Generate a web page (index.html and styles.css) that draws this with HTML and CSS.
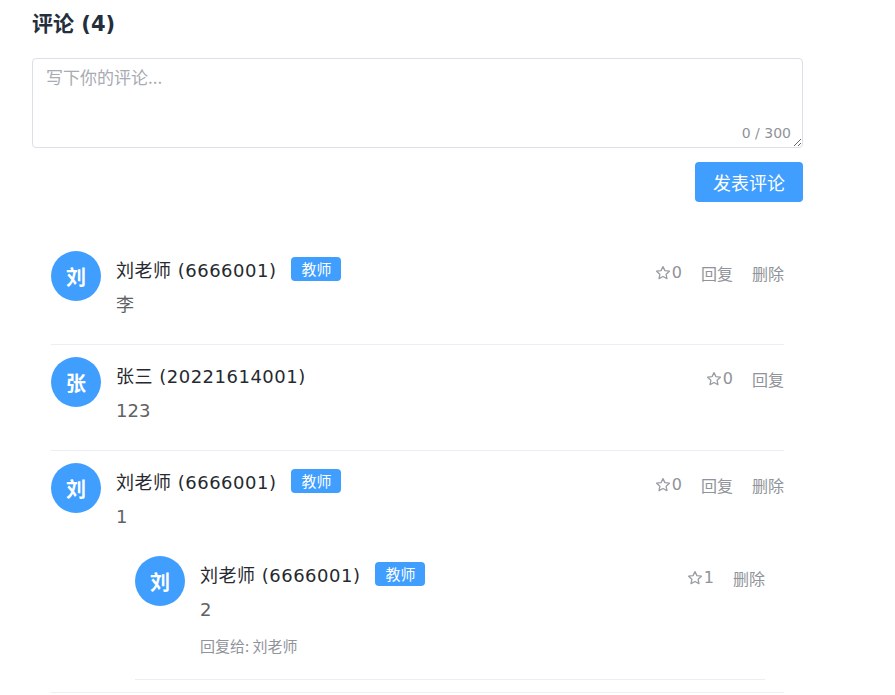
FILE: index.html
```html
<!DOCTYPE html>
<html lang="zh-CN">
<head>
<meta charset="utf-8">
<title>评论</title>
<link rel="stylesheet" href="styles.css">
</head>
<body>
<div class="page">
  <h2 class="title">评论 (4)</h2>
  <div class="editor">
    <textarea class="input" placeholder="写下你的评论..."></textarea>
    <span class="count">0 / 300</span>
  </div>
  <div class="submit-row">
    <button class="btn-primary">发表评论</button>
  </div>

  <div class="comment-list">
    <div class="comment">
      <div class="avatar">刘</div>
      <div class="main">
        <div class="head">
          <div class="who"><span class="name">刘老师 (6666001)</span><span class="tag">教师</span></div>
          <div class="actions">
            <span class="like"><svg class="star" viewBox="0 0 16 16"><path d="M8 1.6l1.95 4.05 4.45.55-3.27 3.07.83 4.41L8 11.52l-3.96 2.16.83-4.41L1.6 6.2l4.45-.55z"/></svg>0</span>
            <span class="act">回复</span>
            <span class="act">删除</span>
          </div>
        </div>
        <div class="text">李</div>
      </div>
    </div>

    <div class="comment">
      <div class="avatar">张</div>
      <div class="main">
        <div class="head">
          <div class="who"><span class="name">张三 (20221614001)</span></div>
          <div class="actions">
            <span class="like"><svg class="star" viewBox="0 0 16 16"><path d="M8 1.6l1.95 4.05 4.45.55-3.27 3.07.83 4.41L8 11.52l-3.96 2.16.83-4.41L1.6 6.2l4.45-.55z"/></svg>0</span>
            <span class="act">回复</span>
          </div>
        </div>
        <div class="text">123</div>
      </div>
    </div>

    <div class="comment">
      <div class="avatar">刘</div>
      <div class="main">
        <div class="head">
          <div class="who"><span class="name">刘老师 (6666001)</span><span class="tag">教师</span></div>
          <div class="actions">
            <span class="like"><svg class="star" viewBox="0 0 16 16"><path d="M8 1.6l1.95 4.05 4.45.55-3.27 3.07.83 4.41L8 11.52l-3.96 2.16.83-4.41L1.6 6.2l4.45-.55z"/></svg>0</span>
            <span class="act">回复</span>
            <span class="act">删除</span>
          </div>
        </div>
        <div class="text">1</div>
        <div class="replies">
          <div class="comment">
            <div class="avatar">刘</div>
            <div class="main">
              <div class="head">
                <div class="who"><span class="name">刘老师 (6666001)</span><span class="tag">教师</span></div>
                <div class="actions">
                  <span class="like"><svg class="star" viewBox="0 0 16 16"><path d="M8 1.6l1.95 4.05 4.45.55-3.27 3.07.83 4.41L8 11.52l-3.96 2.16.83-4.41L1.6 6.2l4.45-.55z"/></svg>1</span>
                  <span class="act">删除</span>
                </div>
              </div>
              <div class="text">2</div>
              <div class="reply-to">回复给: 刘老师</div>
            </div>
          </div>
        </div>
      </div>
    </div>
  </div>
</div>
</body>
</html>
```

FILE: styles.css
```css
* { box-sizing: border-box; }
html, body { margin: 0; background: #fff; }
body {
  font-family: "DejaVu Sans", "Noto Sans CJK SC", sans-serif;
  color: #303133;
}
.page {
  width: 803px;
  padding: 8px 0 0 32px;
}
.title {
  margin: 0;
  font-size: 21px;
  line-height: 32px;
  font-weight: 700;
  color: #242f3d;
}
.editor {
  position: relative;
  margin-top: 18px;
}
.input {
  display: block;
  width: 100%;
  height: 90px;
  border: 1px solid #dcdfe6;
  border-radius: 4px;
  padding: 5px 13px;
  font-family: "Noto Sans CJK SC", sans-serif;
  font-size: 17px;
  line-height: 26px;
  color: #606266;
  resize: vertical;
  outline: none;
}
.input::placeholder { color: #a8abb2; }
.count {
  position: absolute;
  right: 12px;
  bottom: 5px;
  font-size: 14px;
  line-height: 20px;
  color: #909399;
}
.submit-row {
  display: flex;
  justify-content: flex-end;
  margin-top: 14px;
}
.btn-primary {
  height: 40px;
  padding: 0 18px;
  border: none;
  border-radius: 4px;
  background: #409eff;
  color: #fff;
  font-family: "Noto Sans CJK SC", sans-serif;
  font-size: 18px;
}
.comment-list {
  margin: 37px 19px 0;
}
.comment {
  display: flex;
  align-items: flex-start;
  padding-top: 12px;
  border-bottom: 1px solid #ebeef5;
}
.avatar {
  flex: none;
  width: 50px;
  height: 50px;
  border-radius: 50%;
  background: #409eff;
  color: #fff;
  font-family: "Noto Sans CJK SC", sans-serif;
  font-weight: 700;
  font-size: 20px;
  display: flex;
  align-items: center;
  justify-content: center;
}
.main {
  flex: 1;
  margin-left: 15px;
  padding-bottom: 12px;
}
.head {
  display: flex;
  justify-content: space-between;
  align-items: flex-start;
}
.who {
  display: flex;
  align-items: center;
  height: 36px;
}
.name {
  font-size: 18px;
  letter-spacing: 0.5px;
  color: #262a30;
}
.tag {
  margin-left: 15px;
  height: 24px;
  padding: 0 10px;
  border-radius: 4px;
  background: #409eff;
  color: #fff;
  font-family: "Noto Sans CJK SC", sans-serif;
  font-size: 15px;
  line-height: 24px;
}
.actions {
  display: flex;
  gap: 19px;
  margin-top: 13px;
  font-size: 16px;
  line-height: 18px;
  color: #909399;
}
.like {
  display: flex;
  align-items: center;
  gap: 1px;
}
.star {
  width: 16px;
  height: 16px;
  fill: none;
  stroke: #9a9da3;
  stroke-width: 1.3;
  stroke-linejoin: round;
}
.act { font-family: "Noto Sans CJK SC", sans-serif; }
.text {
  font-size: 18px;
  line-height: 36px;
  color: #606266;
  margin-bottom: 9px;
}
.reply-to {
  margin-top: -3px;
  margin-bottom: 9px;
  font-family: "Noto Sans CJK SC", sans-serif;
  font-size: 15px;
  line-height: 24px;
  color: #909399;
}
.replies {
  margin: 0 19px;
}
```
